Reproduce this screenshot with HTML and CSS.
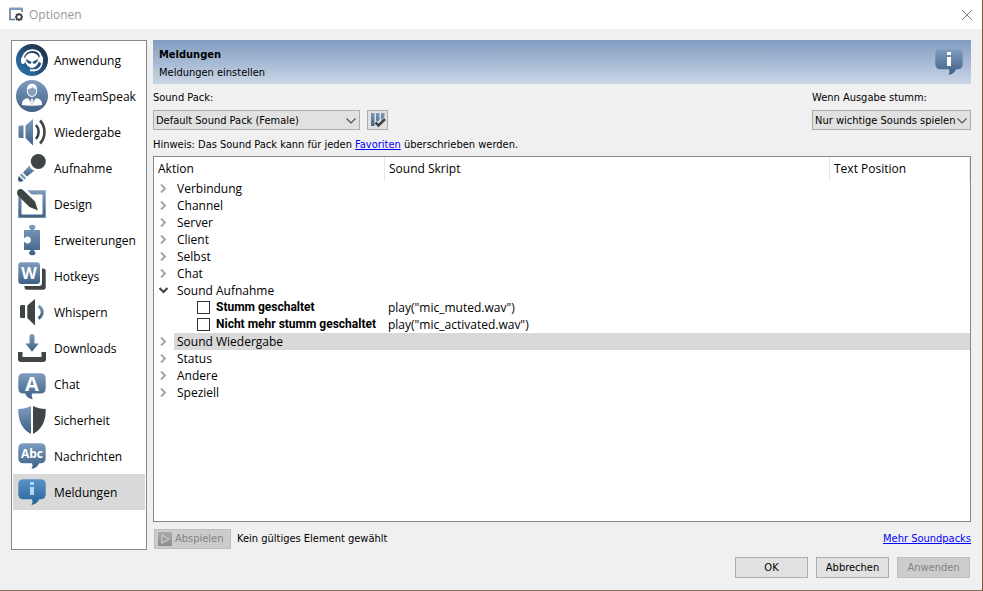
FILE: index.html
```html
<!DOCTYPE html>
<html lang="de">
<head>
<meta charset="utf-8">
<title>Optionen</title>
<link rel="stylesheet" href="styles.css">
</head>
<body>
<svg class="defs" aria-hidden="true">
  <defs>
    <linearGradient id="steel" x1="0" y1="0" x2="0" y2="1"><stop offset="0" stop-color="#7f9cc0"/><stop offset="1" stop-color="#3d6084"/></linearGradient>
    <linearGradient id="azure" x1="0" y1="0" x2="0" y2="1"><stop offset="0" stop-color="#5b93c8"/><stop offset="1" stop-color="#25629a"/></linearGradient>
    <linearGradient id="night" x1="1" y1="0" x2="0" y2="1"><stop offset="0.1" stop-color="#202c42"/><stop offset="1" stop-color="#2a7cba"/></linearGradient>
    <linearGradient id="grey" x1="0" y1="0" x2="0" y2="1"><stop offset="0" stop-color="#ababab"/><stop offset="1" stop-color="#8c8c8c"/></linearGradient>
  </defs>
</svg>
<div class="window">
  <header class="titlebar">
    <svg class="app-icon" viewBox="0 0 16 16" aria-hidden="true">
      <path d="M6 12.500H1V2H13V5" fill="none" stroke="#53759b" stroke-width="1.500"/>
      <path d="M0.500 1.500H13.500" stroke="#7f9cc0" stroke-width="2"/>
      <circle cx="10" cy="10" r="2.600" fill="none" stroke="#3f4546" stroke-width="1.700"/>
      <path d="M10 6v1M10 13v1M6 10h1M13 10h1M7 7l1 1M12 12l1 1M7 13l1-1M12 8l1-1" stroke="#3f4546" stroke-width="1.500"/>
    </svg>
    <h1 class="title">Optionen</h1>
    <button class="close" aria-label="Schließen"><svg viewBox="0 0 12 12"><path d="M1 1l10 10M11 1L1 11" fill="none" stroke="#848484"/></svg></button>
  </header>

  <div class="content">
    <nav class="sidebar">
      <a class="item" href="#"><svg viewBox="0 0 32 32"><circle cx="16" cy="16" r="16" fill="url(#night)"/><path d="M7 15C7 4 24 3 25 13" fill="none" stroke="#fff" stroke-width="1.800"/><path d="M9 16c0-5 3-7 7-7s7 2 7 7c0 4-4 8-7 8s-7-4-7-8z" fill="#fff"/><rect x="5" y="13" width="4" height="7" rx="2" fill="#fff"/><rect x="23" y="12" width="4" height="7" rx="2" fill="#fff"/><path d="M10 15l5.500 3c0 3-5 2-5.500-3zM22 15l-5.500 3c0 3 5 2 5.500-3z" fill="#244e76"/><path d="M26 18c0 5-4 8.500-8 8.500" fill="none" stroke="#fff" stroke-width="1.500"/><path d="M14 26.300h5" stroke="#fff" stroke-width="2"/></svg><span>Anwendung</span></a>
      <a class="item" href="#"><svg viewBox="0 0 32 32"><circle cx="16" cy="16" r="16" fill="url(#steel)"/><path d="M11 9c0-7 10-7 10 0 1 5-2 8-5 8s-6-3-5-8z" fill="#fff"/><path d="M12 9c2 0 3-1 5-2 1 2 2 2 3 2 1 4-1 7-4 7s-5-3-4-7z" fill="#86a0bd"/><path d="M6 25c0-5 2-6 6-7l4 6 4-6c4 1 6 2 6 7-5 1-15 1-20 0z" fill="#fff"/><path d="M15 18.500h2l1 5-2 2-2-2z" fill="#dce5ee"/></svg><span>myTeamSpeak</span></a>
      <a class="item" href="#"><svg viewBox="0 0 32 32"><path d="M4 9.500h3.500v12.500H4q-1.500 0-1.500-1.500v-9.500q0-1.500 1.500-1.500zM9.500 9.500L17 3v26.500L9.500 22z" fill="url(#steel)"/><path d="M20 9c3.500 4 3.500 10 0 14M24 4.500c6 6.500 6 16.500 0 23" fill="none" stroke="#3f4546" stroke-width="2.600"/></svg><span>Wiedergabe</span></a>
      <a class="item" href="#"><svg viewBox="0 0 32 32"><circle cx="22.300" cy="9.500" r="7.500" fill="#3f4546"/><path d="M13.500 13.500c1 3 2 4 5 5l-7.500 6-4-4z" fill="url(#steel)"/><path d="M5.500 21.500l4.500 4.500-1.500 1.500-4.500-4.500z" fill="#7894b5"/><path d="M3 24l4.500 4.500c-2 2-5 1.500-5.200 0-.5-1.500-.3-3 .7-4.500z" fill="#3d6084"/></svg><span>Aufnahme</span></a>
      <a class="item" href="#"><svg viewBox="0 0 32 32"><path d="M2.300 2.300h27.400v27.400H2.300zM5.500 6.500v20h21v-20z" fill="url(#steel)" fill-rule="evenodd"/><path d="M2 0L0 5l14 16 10 3-2-11L10 1z" fill="#fff"/><path d="M2 2C3.500.5 6 .8 7 2L19 13.500l3 9-8.500-3.500L1.800 7.500C.8 6 .8 3.500 2 2z" fill="#3f4546"/></svg><span>Design</span></a>
      <a class="item" href="#"><svg viewBox="0 0 32 32"><path d="M8 6h6.500c.5-1-1.500-1.500-1.500-3 0-3 6.500-3 6.500 0 0 1.500-2 2-1.500 3h6v20h-6c-.5 1 1.500 1.500 1.500 3 0 3-6.500 3-6.500 0 0-1.500 2-2 1.500-3H8v-8c1-.5 1.500 1.500 3.500 1.500 4.500 0 4.500-7 0-7-2 0-2.500 2-3.500 1.500z" fill="url(#steel)"/></svg><span>Erweiterungen</span></a>
      <a class="item" href="#"><svg viewBox="0 0 32 32"><rect x="8.500" y="8.500" width="21.200" height="21.200" rx="2.500" fill="#3f4546"/><rect x="1" y="1" width="25" height="25" rx="3" fill="#fff"/><rect x="2.300" y="2.300" width="21.700" height="21.700" rx="3" fill="url(#steel)"/><text class="glyph-w" x="13" y="18.500">W</text></svg><span>Hotkeys</span></a>
      <a class="item" href="#"><svg viewBox="0 0 32 32"><path d="M5.500 9H9v13H5.500Q4 22 4 20.500v-10Q4 9 5.500 9zM11.300 9.500L19 3v26.500L11.300 22z" fill="#3f4546"/><path d="M22.500 10c5 3 5 9 0 12.500" fill="none" stroke="url(#steel)" stroke-width="3"/></svg><span>Whispern</span></a>
      <a class="item" href="#"><svg viewBox="0 0 32 32"><path d="M13.500 4q0-2 2.500-2t2.500 2v7.500h4.200L16 19.700l-6.500-8.200h4z" fill="url(#steel)"/><path d="M2 20h4.500v5h19v-5H30v7q0 3-3 3H5q-3 0-3-3z" fill="#3f4546"/></svg><span>Downloads</span></a>
      <a class="item" href="#"><svg viewBox="0 0 32 32"><path d="M7.500 5.300h17q5.200 0 5.200 5v10q0 5.200-5.200 5.200H16q-1 2 .7 5.700-6-1-7.500-5.700H7.500q-5.200 0-5.200-5.200v-10q0-5 5.200-5z" fill="url(#steel)"/><text class="glyph-a" x="16" y="22.500">A</text></svg><span>Chat</span></a>
      <a class="item" href="#"><svg viewBox="0 0 32 32"><path d="M15 2v28C6 25 2 17 2.300 5 7 5 11 4 15 2z" fill="url(#steel)"/><path d="M17 2v28c9-5 13-13 12.700-25C25 5 21 4 17 2z" fill="#3f4546"/></svg><span>Sicherheit</span></a>
      <a class="item" href="#"><svg viewBox="0 0 32 32"><path d="M7.500 3.300h17q5.200 0 5.200 5v10q0 5-5.200 5h-1.200q-2.500 5-7.800 5.700 2-3 .5-5.700H7.500q-5.200 0-5.200-5v-10q0-5 5.200-5z" fill="url(#steel)"/><text class="glyph-abc" x="16" y="18">Abc</text></svg><span>Nachrichten</span></a>
      <a class="item selected" href="#" aria-current="page"><svg viewBox="0 0 32 32"><path d="M7.500 3.300h17q5.200 0 5.200 5v10q0 5-5.200 5h-1.200q-2.500 5-7.800 5.700 2-3 .5-5.700H7.500q-5.200 0-5.200-5v-10q0-5 5.200-5z" fill="url(#azure)"/><path d="M14 6h4v3h-4zM14 11h4v8h-4z" fill="#b5d8fa"/></svg><span>Meldungen</span></a>
    </nav>

    <main class="page">
      <div class="banner">
        <div class="banner-text"><h2>Meldungen</h2><p>Meldungen einstellen</p></div>
        <svg viewBox="0 0 32 32" aria-hidden="true"><path d="M7.500 3.300h17q5.200 0 5.200 5v10q0 5-5.200 5h-1.200q-2.500 5-7.800 5.700 2-3 .5-5.700H7.500q-5.200 0-5.200-5v-10q0-5 5.200-5z" fill="url(#steel)"/><path d="M14 6h4v3h-4zM14 11h4v9h-4z" fill="#fff"/></svg>
      </div>

      <div class="settings">
        <div class="field field-pack">
          <label for="pack">Sound Pack:</label>
          <div class="control">
            <div class="combo"><select id="pack"><option>Default Sound Pack (Female)</option></select><svg viewBox="0 0 10 6"><path d="M0.500 0.500L5 5l4.500-4.500" fill="none" stroke="#505050" stroke-width="1.200"/></svg></div>
            <button class="tool" aria-label="Sound Packs verwalten"><svg viewBox="0 0 16 16"><path d="M1 1h3.500v13H1zM6 1h3.500v7L8 9.500l-2-1zM11 1h3.500v4L11 8z" fill="url(#steel)"/><path d="M5.500 10.500l3 3 6.500-6.500" fill="none" stroke="#3f4546" stroke-width="2.500"/></svg></button>
          </div>
        </div>
        <div class="field field-mute">
          <label for="mute">Wenn Ausgabe stumm:</label>
          <div class="combo"><select id="mute"><option>Nur wichtige Sounds spielen</option></select><svg viewBox="0 0 10 6"><path d="M0.500 0.500L5 5l4.500-4.500" fill="none" stroke="#505050" stroke-width="1.200"/></svg></div>
        </div>
      </div>
      <p class="hint">Hinweis: Das Sound Pack kann für jeden <a href="#">Favoriten</a> überschrieben werden.</p>

      <div class="tree">
        <table>
          <colgroup><col class="col-action"><col class="col-script"><col></colgroup>
          <thead><tr><th>Aktion</th><th>Sound Skript</th><th>Text Position</th></tr></thead>
          <tbody>
            <tr><td colspan="3"><button class="node"><svg viewBox="0 0 9 9"><path d="M2 0.500l4 4-4 4"/></svg><span>Verbindung</span></button></td></tr>
            <tr><td colspan="3"><button class="node"><svg viewBox="0 0 9 9"><path d="M2 0.500l4 4-4 4"/></svg><span>Channel</span></button></td></tr>
            <tr><td colspan="3"><button class="node"><svg viewBox="0 0 9 9"><path d="M2 0.500l4 4-4 4"/></svg><span>Server</span></button></td></tr>
            <tr><td colspan="3"><button class="node"><svg viewBox="0 0 9 9"><path d="M2 0.500l4 4-4 4"/></svg><span>Client</span></button></td></tr>
            <tr><td colspan="3"><button class="node"><svg viewBox="0 0 9 9"><path d="M2 0.500l4 4-4 4"/></svg><span>Selbst</span></button></td></tr>
            <tr><td colspan="3"><button class="node"><svg viewBox="0 0 9 9"><path d="M2 0.500l4 4-4 4"/></svg><span>Chat</span></button></td></tr>
            <tr><td colspan="3"><button class="node open" aria-expanded="true"><svg viewBox="0 0 9 9"><path d="M0.500 2l4 4 4-4"/></svg><span>Sound Aufnahme</span></button></td></tr>
            <tr><td><label class="leaf"><input type="checkbox">Stumm geschaltet</label></td><td class="script">play("mic_muted.wav")</td><td></td></tr>
            <tr><td><label class="leaf"><input type="checkbox">Nicht mehr stumm geschaltet</label></td><td class="script">play("mic_activated.wav")</td><td></td></tr>
            <tr><td colspan="3"><button class="node current"><svg viewBox="0 0 9 9"><path d="M2 0.500l4 4-4 4"/></svg><span>Sound Wiedergabe</span></button></td></tr>
            <tr><td colspan="3"><button class="node"><svg viewBox="0 0 9 9"><path d="M2 0.500l4 4-4 4"/></svg><span>Status</span></button></td></tr>
            <tr><td colspan="3"><button class="node"><svg viewBox="0 0 9 9"><path d="M2 0.500l4 4-4 4"/></svg><span>Andere</span></button></td></tr>
            <tr><td colspan="3"><button class="node"><svg viewBox="0 0 9 9"><path d="M2 0.500l4 4-4 4"/></svg><span>Speziell</span></button></td></tr>
          </tbody>
        </table>
      </div>

      <div class="player">
        <button class="play" disabled><svg viewBox="0 0 14 14"><rect width="14" height="14" fill="url(#grey)"/><path d="M4 3l7 4-7 4z" fill="#999" stroke="#ccc" stroke-width="1.200"/></svg>Abspielen</button>
        <span>Kein gültiges Element gewählt</span>
        <a class="more" href="#">Mehr Soundpacks</a>
      </div>
    </main>
  </div>

  <footer class="actions">
    <button>OK</button>
    <button>Abbrechen</button>
    <button disabled>Anwenden</button>
  </footer>
</div>
</body>
</html>
```
FILE: styles.css
```css
* { box-sizing: border-box; }

body {
  margin: 0;
  background: #f0f0f0;
  color: #000;
  font: 11px/14px "DejaVu Sans Condensed", "DejaVu Sans", sans-serif;
}

h1, h2, p { margin: 0; font-size: inherit; }
button, select { font: inherit; color: inherit; }
svg { display: block; flex: none; }
a { color: #0000ff; }
.defs { position: absolute; width: 0; height: 0; }

.window {
  display: flex;
  flex-direction: column;
  min-height: 100vh;
  border-right: 1px solid #7b5749;
  border-bottom: 1px solid #85705f;
}

.titlebar {
  display: flex;
  align-items: center;
  height: 29px;
  padding: 0 9px;
  background: #fff;
  color: #999;
}
.app-icon { width: 16px; height: 16px; }
.title {
  margin-left: 4px;
  font: 12px/16px "Open Sans", sans-serif;
}
.close {
  margin-left: auto;
  padding: 0;
  border: 0;
  background: none;
}
.close svg { width: 12px; height: 12px; }

.content {
  display: flex;
  flex: 1;
  gap: 6px;
  padding: 11px 11px 0;
}

.sidebar {
  flex: none;
  width: 136px;
  padding: 1px;
  border: 1px solid #828790;
  background: #fff;
}
.item {
  display: flex;
  align-items: center;
  gap: 6px;
  height: 36px;
  padding-left: 3px;
  color: #000;
  font: 12px/16px "Open Sans", sans-serif;
  text-decoration: none;
}
.item svg { width: 32px; height: 32px; }
.item span { padding-top: 2px; }
.selected { background: #d9d9d9; }
.glyph-w, .glyph-a, .glyph-abc {
  fill: #fff;
  font-family: "Open Sans", sans-serif;
  font-weight: 700;
  text-anchor: middle;
}
.glyph-w { font-size: 16px; }
.glyph-a { font-size: 20px; }
.glyph-abc { font-size: 12px; }

.page {
  display: flex;
  flex: 1;
  flex-direction: column;
  min-width: 0;
}
.banner {
  display: flex;
  justify-content: space-between;
  height: 44px;
  padding: 6px;
  background: linear-gradient(#819cc0, #cad6e6);
}
.banner svg { width: 32px; height: 32px; }
.banner-text { line-height: 18px; }

.settings {
  display: flex;
  justify-content: space-between;
  padding-top: 7px;
}
.field label { display: block; margin-bottom: 5px; }
.field-mute { width: 159px; }
.control { display: flex; gap: 7px; }
.field-pack .combo { width: 207px; }
.combo { position: relative; }
.combo select {
  display: block;
  width: 100%;
  height: 20px;
  padding: 1px 2px 0;
  border: 1px solid #adadad;
  border-radius: 0;
  background: #e1e1e1;
  appearance: none;
}
.combo svg {
  position: absolute;
  top: 8px;
  right: 4px;
  width: 10px;
  height: 6px;
  pointer-events: none;
}
.tool {
  width: 21px;
  height: 20px;
  padding: 1px 2px;
  border: 1px solid #adadad;
  background: #e1e1e1;
}
.tool svg { width: 16px; height: 16px; }
.hint { margin: 8px 0 4px; }

.tree {
  flex: 1;
  border: 1px solid #828790;
  background: #fff;
  font: 12px/17px "Open Sans", sans-serif;
}
table {
  width: 100%;
  border-spacing: 0;
  table-layout: fixed;
}
.col-action { width: 231px; }
.col-script { width: 445px; }
th {
  height: 23px;
  padding: 0 4px;
  border-right: 1px solid #e5e5e5;
  font-weight: 400;
  text-align: left;
}
td { height: 17px; padding: 0; white-space: nowrap; }
.node {
  display: flex;
  align-items: center;
  gap: 6px;
  width: 100%;
  height: 17px;
  padding: 0 0 0 5px;
  border: 0;
  background: none;
  text-align: left;
}
.node svg { width: 9px; height: 9px; }
.node path { fill: none; stroke: #a6a6a6; stroke-width: 2; }
.node.open path { stroke: #404040; }
.node span { flex: 1; padding-left: 3px; }
.current span { background: #d9d9d9; }
.leaf {
  display: flex;
  align-items: center;
  gap: 6px;
  padding-left: 43px;
  font-family: Roboto, "Open Sans", sans-serif;
  font-weight: 700;
}
.leaf input {
  flex: none;
  width: 13px;
  height: 13px;
  margin: 0;
  border: 1px solid #333;
  background: #fff;
  appearance: none;
}
.script { padding-left: 3px; }

.player {
  display: flex;
  align-items: center;
  gap: 6px;
  padding: 7px 0 1px 1px;
}
.play {
  display: flex;
  align-items: center;
  gap: 3px;
  width: 77px;
  height: 20px;
  padding: 0 3px;
}
.play svg { width: 14px; height: 14px; }
.more { margin-left: auto; }

.play, .actions button {
  border: 1px solid #adadad;
  background: #e1e1e1;
}
.play:disabled, .actions button:disabled {
  border-color: #bfbfbf;
  background: #ccc;
  color: #838383;
}
.actions {
  display: flex;
  justify-content: flex-end;
  gap: 8px;
  padding: 7px 12px 12px;
}
.actions button { width: 73px; height: 21px; padding: 0; }
```
